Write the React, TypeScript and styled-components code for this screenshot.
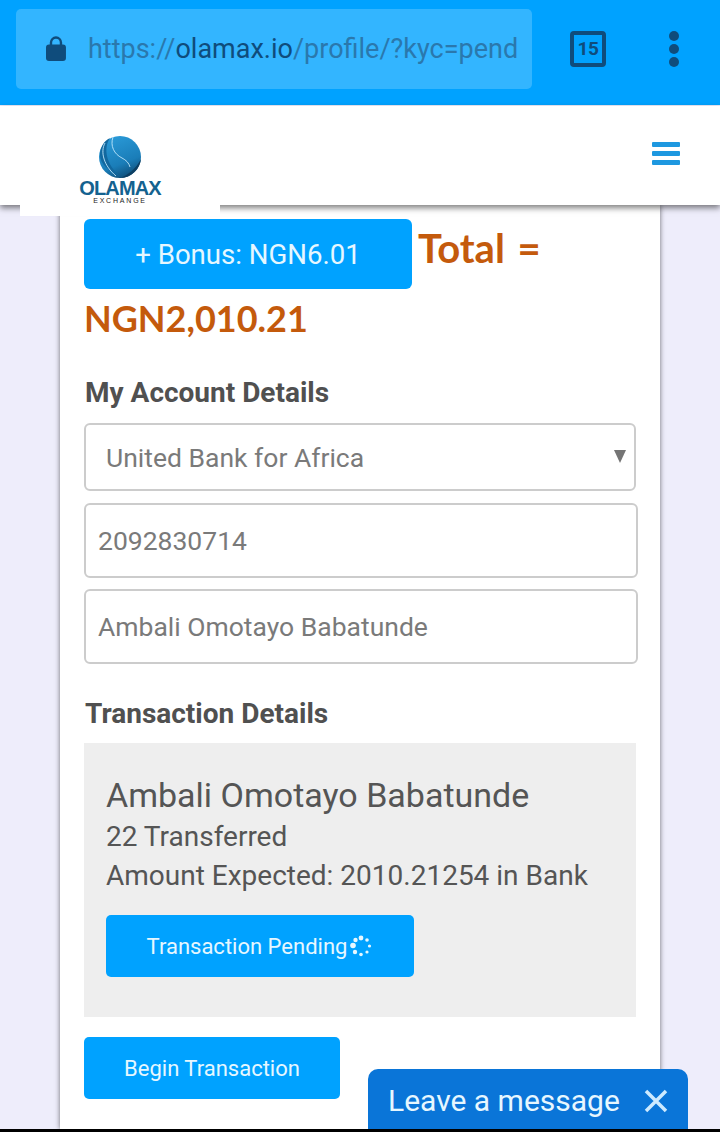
import styled, { createGlobalStyle } from "styled-components";
import { useId } from "react";

const GlobalStyle = createGlobalStyle`
  * {
    box-sizing: border-box;
  }

  body {
    background-color: #eeedfb;
    font-family: Roboto, "Liberation Sans", sans-serif;
    margin: 0;
  }
`;

function Lock() {
  return (
    <svg width="20" height="25" viewBox="0 0 20 25" aria-hidden="true">
      <path
        d="M5 10V6.5a5 5 0 0 1 10 0V10"
        fill="none"
        stroke="#0f4c7c"
        strokeWidth="2.4"
      />
      <rect x="0" y="8.5" width="20" height="16.5" rx="3" fill="#0f4c7c" />
    </svg>
  );
}

function Globe() {
  const id = useId();
  return (
    <svg width="44" height="44" viewBox="0 0 44 44" aria-hidden="true">
      <defs>
        <linearGradient id={id} x1="0.3" y1="0" x2="0.7" y2="1">
          <stop offset="0" stopColor="#2a9ad8" />
          <stop offset="0.65" stopColor="#1a7db8" />
          <stop offset="1" stopColor="#0e4a73" />
        </linearGradient>
      </defs>
      <circle cx="22" cy="22" r="21" fill={`url(#${id})`} />
      <path
        d="M12 3C5 13 8 30 23 42C12 36 2 30 2 20C2 12 6 6 12 3z"
        fill="#12689f"
      />
      <path
        d="M15 2c-3 9 1 17 9 21 4 2 7 5 8 9"
        fill="none"
        stroke="#bfe6fa"
        strokeWidth="0.9"
      />
      <path
        d="M7 8C2 17 6 31 18 41"
        fill="none"
        stroke="#bfe6fa"
        strokeWidth="0.9"
      />
      <path d="M43 24c-1 10-10 19-21 19 8-3 16-9 21-19z" fill="#0d3f63" />
    </svg>
  );
}

function Spinner() {
  const dots = [
    [11, 3, 2.4],
    [17, 5, 1.8],
    [19.5, 11, 1.6],
    [17, 17, 1.6],
    [11, 19.5, 1.8],
    [5, 17, 2.2],
    [3, 10.5, 2.8],
    [5.5, 5, 2.2],
  ];
  return (
    <svg width="23" height="23" viewBox="0 0 23 23" aria-hidden="true">
      {dots.map(([cx, cy, r]) => (
        <circle key={`${cx}-${cy}`} cx={cx} cy={cy} r={r} fill="#e6f7ff" />
      ))}
    </svg>
  );
}

function App() {
  return (
    <Page>
      <GlobalStyle />
      <BrowserBar>
        <AddressBar>
          <Lock />
          <Url>
            https://<strong>olamax.io</strong>/profile/?kyc=pend
          </Url>
        </AddressBar>
        <TabCount>15</TabCount>
        <MenuDots>
          <Dot />
          <Dot />
          <Dot />
        </MenuDots>
      </BrowserBar>

      <SiteHeader>
        <LogoTab>
          <Globe />
          <LogoName>OLAMAX</LogoName>
          <LogoSub>EXCHANGE</LogoSub>
        </LogoTab>
        <Hamburger>
          <Bar />
          <Bar />
          <Bar />
        </Hamburger>
      </SiteHeader>

      <Main>
        <Card>
          <TotalBlock>
            <BonusButton>+ Bonus: NGN6.01</BonusButton>{" "}
            <TotalLabel>Total =</TotalLabel>
            <br />
            <Total>NGN2,010.21</Total>
          </TotalBlock>

          <SectionTitle>My Account Details</SectionTitle>
          <SelectWrap>
            <BankSelect defaultValue="uba">
              <option value="uba">United Bank for Africa</option>
            </BankSelect>
          </SelectWrap>
          <Field readOnly value="2092830714" />
          <Field readOnly value="Ambali Omotayo Babatunde" />

          <SectionTitle $second>Transaction Details</SectionTitle>
          <Details>
            <DetailName>Ambali Omotayo Babatunde</DetailName>
            <DetailLine>22 Transferred</DetailLine>
            <DetailLine>Amount Expected: 2010.21254 in Bank</DetailLine>
            <PendingButton>
              Transaction Pending
              <Spinner />
            </PendingButton>
          </Details>
          <BeginButton>Begin Transaction</BeginButton>
        </Card>
      </Main>

      <BottomEdge />

      <ChatWidget>
        Leave a message
        <CloseIcon viewBox="0 0 24 24" aria-hidden="true">
          <path d="M2 2l20 20M22 2L2 22" />
        </CloseIcon>
      </ChatWidget>
    </Page>
  );
}

const Page = styled.div`
  display: flex;
  flex-direction: column;
  height: 1132px;
  overflow: hidden;
  position: relative;
  width: 720px;
`;

const BrowserBar = styled.div`
  align-items: center;
  background-color: #00a2ff;
  display: flex;
  flex-shrink: 0;
  height: 105px;
  padding: 0 0 8px 16px;
`;

const AddressBar = styled.div`
  align-items: center;
  background-color: #33b5ff;
  border-radius: 5px;
  display: flex;
  gap: 22px;
  height: 80px;
  padding: 0 15px 0 30px;
  width: 516px;
`;

const Url = styled.div`
  color: #2a78ad;
  font-size: 27px;
  overflow: hidden;
  white-space: nowrap;

  strong {
    color: #0f4c7c;
    font-weight: 400;
  }
`;

const TabCount = styled.div`
  align-items: center;
  border: 4px solid #0f4c7c;
  border-radius: 4px;
  color: #0f4c7c;
  display: flex;
  font-size: 19px;
  font-weight: 700;
  height: 36px;
  justify-content: center;
  letter-spacing: -0.5px;
  margin-left: 38px;
  width: 36px;
`;

const MenuDots = styled.div`
  display: flex;
  flex-direction: column;
  gap: 3px;
  margin-left: 63px;
`;

const Dot = styled.span`
  background-color: #0f4c7c;
  border-radius: 50%;
  height: 10px;
  width: 10px;
`;

const SiteHeader = styled.header`
  align-items: flex-start;
  background-color: #fff;
  box-shadow: 0 3px 6px rgba(0, 0, 0, 0.5);
  display: flex;
  flex-shrink: 0;
  height: 99px;
  justify-content: space-between;
  margin-top: 1px;
  padding: 0 40px 0 20px;
  position: relative;
  z-index: 1;
`;

const LogoTab = styled.div`
  align-items: center;
  background-color: #fff;
  display: flex;
  flex-direction: column;
  height: 110px;
  padding-top: 29px;
  width: 200px;
`;

const LogoName = styled.div`
  color: #14628f;
  font-family: "Liberation Sans", Arial, sans-serif;
  font-size: 20px;
  font-weight: 700;
  letter-spacing: -0.9px;
  line-height: 17px;
  margin-top: 1px;
`;

const LogoSub = styled.div`
  color: #222;
  font-family: "Liberation Sans", Arial, sans-serif;
  font-size: 7px;
  letter-spacing: 1.8px;
  line-height: 8px;
`;

const Hamburger = styled.div`
  display: flex;
  flex-direction: column;
  gap: 4px;
  margin-top: 36px;
`;

const Bar = styled.span`
  background-color: #1e98e0;
  border-radius: 1px;
  height: 5px;
  width: 28px;
`;

const Main = styled.main`
  flex: 1;
  min-height: 0;
  padding: 0 60px;
`;

const Card = styled.section`
  background-color: #fff;
  box-shadow: 0 0 5px rgba(0, 0, 0, 0.55);
  display: flex;
  flex-direction: column;
  height: 100%;
  padding: 14px 22px 0 24px;
`;

const TotalBlock = styled.div`
  line-height: 58px;
`;

const BonusButton = styled.button`
  background-color: #00a2ff;
  border: none;
  border-radius: 6px;
  color: #e6f7ff;
  font-family: inherit;
  font-size: 27.6px;
  height: 70px;
  padding: 0;
  vertical-align: top;
  width: 328px;
`;

const Total = styled.span`
  color: #c45a0c;
  font-family: Lato, "Noto Sans", sans-serif;
  font-size: 36px;
  font-weight: 700;
`;

const TotalLabel = styled(Total)`
  font-size: 40px;
  margin-left: 2px;
  word-spacing: 3px;
`;

const SectionTitle = styled.h2<{ $second?: boolean }>`
  color: #505050;
  font-size: 28px;
  font-weight: 700;
  line-height: 32px;
  margin: ${(props) => (props.$second ? "23px 0 13px 1px" : "21px 0 14px 1px")};
`;

const SelectWrap = styled.div`
  margin-bottom: 12px;
  position: relative;
  width: 552px;

  &::after {
    border-left: 6px solid transparent;
    border-right: 6px solid transparent;
    border-top: 13px solid #757575;
    content: "";
    position: absolute;
    right: 10px;
    top: 27px;
  }
`;

const BankSelect = styled.select`
  appearance: none;
  background-color: #fff;
  border: 2px solid #ccc;
  border-radius: 6px;
  color: #7a7a7a;
  display: block;
  font-family: inherit;
  font-size: 26.5px;
  height: 68px;
  padding: 0 0 0 20px;
  width: 100%;
`;

const Field = styled.input`
  border: 2px solid #ccc;
  border-radius: 6px;
  color: #7a7a7a;
  display: block;
  flex-shrink: 0;
  font-family: inherit;
  font-size: 26.5px;
  height: 75px;
  margin-bottom: 11px;
  outline: none;
  padding: 0 12px;
  width: 554px;
`;

const Details = styled.div`
  background-color: #eee;
  color: #555;
  flex-shrink: 0;
  height: 274px;
  padding: 29px 22px 0;
  width: 552px;
`;

const DetailName = styled.div`
  font-size: 34px;
  line-height: 46px;
`;

const DetailLine = styled.div`
  font-size: 28px;
  line-height: 38.5px;
`;

const PendingButton = styled.button`
  align-items: center;
  background-color: #00a2ff;
  border: none;
  border-radius: 5px;
  color: #e6f7ff;
  display: flex;
  font-family: inherit;
  font-size: 22px;
  gap: 3px;
  height: 62px;
  justify-content: center;
  margin-top: 20px;
  padding: 0;
  width: 308px;
`;

const BeginButton = styled.button`
  background-color: #00a2ff;
  border: none;
  border-radius: 5px;
  color: #e6f7ff;
  flex-shrink: 0;
  font-family: inherit;
  font-size: 22px;
  height: 62px;
  margin-top: 20px;
  padding: 0;
  width: 256px;
`;

const BottomEdge = styled.div`
  background-color: #000;
  flex-shrink: 0;
  height: 3px;
  position: relative;
  z-index: 3;
`;

const ChatWidget = styled.div`
  align-items: center;
  background-color: #0a75d8;
  border-radius: 10px 10px 0 0;
  bottom: 0;
  color: #e6f7ff;
  display: flex;
  font-size: 30px;
  gap: 24px;
  height: 63px;
  left: 368px;
  padding: 0 20px;
  position: absolute;
  width: 320px;
  z-index: 2;
`;

const CloseIcon = styled.svg`
  fill: none;
  height: 24px;
  stroke: #cdeaff;
  stroke-width: 3.5;
  width: 24px;
`;

export default App;
